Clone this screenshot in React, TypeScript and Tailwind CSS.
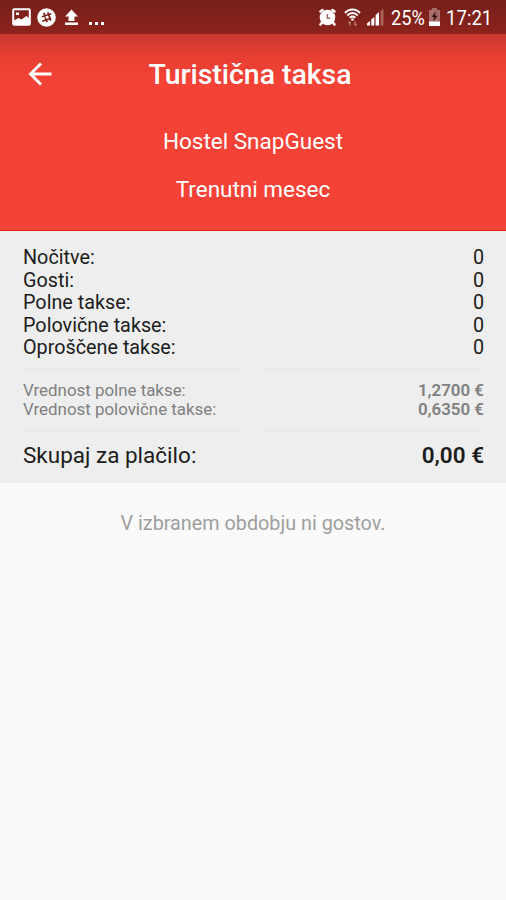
import type { ReactNode } from "react";

const COUNTS = [
  { label: "Nočitve:", value: "0" },
  { label: "Gosti:", value: "0" },
  { label: "Polne takse:", value: "0" },
  { label: "Polovične takse:", value: "0" },
  { label: "Oproščene takse:", value: "0" },
];

const RATES = [
  { label: "Vrednost polne takse:", value: "1,2700 €" },
  { label: "Vrednost polovične takse:", value: "0,6350 €" },
];

function Row({ label, children, className }: { label: string; children: ReactNode; className: string }) {
  return (
    <div className={`flex items-center justify-between whitespace-nowrap ${className}`}>
      <span>{label}</span>
      {children}
    </div>
  );
}

function Divider() {
  return (
    <div className="flex gap-3.5">
      <div className="h-px w-[222px] bg-[#e7e7e7]" />
      <div className="h-px flex-1 bg-[#e7e7e7]" />
    </div>
  );
}

function StatusBar() {
  return (
    <div className="flex h-[34px] items-center justify-between bg-linear-to-b from-[#751f1a] to-[#8b231c] pr-[14px] pl-3 text-white">
      <div className="flex items-center">
        {/* Gallery */}
        <svg className="h-[18px] w-[19px]" viewBox="0 0 19 18" fill="none">
          <rect x="1.2" y="1.2" width="16.6" height="15.6" rx="1" stroke="#fff" strokeWidth="2" />
          <path d="M2 12.500l4.500-2.500 3 1.500 5-3.500 3 2.500v6.500H2z" fill="#fff" />
          <path d="M4 4.500h3v2.500H4z" fill="#fff" />
        </svg>
        {/* Slack */}
        <svg className="ml-1.5 h-[19px] w-[19px]" viewBox="0 0 19 19">
          <circle cx="9.500" cy="9.500" r="9.300" fill="#fff" />
          <path d="M7 5.500l2.800 8M11 5l2.500 7M5.500 8.500l8-2.500M6 13l7.500-2.500" stroke="#7d211b" strokeWidth="1.800" strokeLinecap="round" />
          <circle cx="9.800" cy="9.300" r="1.100" fill="#fff" />
        </svg>
        {/* Upload */}
        <svg className="ml-[8px] h-[17px] w-[15px]" viewBox="0 0 15 17" fill="#fff">
          <path d="M7.500 .5L14 7.500h-3.500V12h-6V7.500H1zM1 13.500h13V16H1z" />
        </svg>
        <div className="mt-[12px] ml-[10px] flex gap-[3px]">
          <span className="size-[3px] bg-white" />
          <span className="size-[3px] bg-white" />
          <span className="size-[3px] bg-white" />
        </div>
      </div>
      <div className="flex items-center">
        {/* Alarm */}
        <svg className="h-[19px] w-[19px]" viewBox="0 0 19 19" fill="none">
          <circle cx="8.500" cy="9.500" r="7.800" fill="#fff" />
          <path d="M1.500 3.500L3.500 2M15.500 3.500L13.500 2M3 14.500L1.500 16.500M14 14.500l1.500 2" stroke="#fff" strokeWidth="2.600" strokeLinecap="round" />
          <path d="M8.300 6v4.200h3" stroke="#a46c68" strokeWidth="1.400" />
        </svg>
        {/* Wi-Fi */}
        <svg className="ml-[6px] h-[19px] w-[17px]" viewBox="0 0 17 19" fill="none" stroke="#fff">
          <path d="M1 5C5 .3 12 .3 16 5M3.300 7.500c3-3.400 7.400-3.400 10.400 0M5.800 9.800c1.600-1.600 3.800-1.600 5.400 0" strokeWidth="2" />
          <circle cx="8.500" cy="11.500" r="1.300" fill="#fff" stroke="none" />
          <path d="M6 17.500v-4M4.500 15L6 13.500M11 13.500v4M12.500 16L11 17.500" stroke="#bb8581" strokeWidth="1.200" />
        </svg>
        {/* Signal */}
        <svg className="ml-[6px] h-[18px] w-[17px]" viewBox="0 0 17 18" fill="#fff">
          <path d="M0 17.500v-2l3-2.500v4.500zM4.300 11.500l3-2.500v8.500h-3zM8.600 7l3.400-3v13.500H8.600z" />
          <path d="M13.500 3L16.500 .5v17h-3z" fill="#a9605b" />
        </svg>
        <span className="ml-[7px] w-[34px] pt-px text-[20px] leading-6 whitespace-nowrap">
          <span className="inline-block origin-left scale-x-[.91]">25%</span>
        </span>
        {/* Battery */}
        <svg className="ml-[4px] h-[18px] w-[11px]" viewBox="0 0 11 18">
          <path d="M3 0h5v2h3v16H0V2h3z" fill="#a96d69" />
          <path d="M0 13.500h11V18H0z" fill="#fff" />
          <path d="M7 3.500L2.500 9h2.700L4 13.500 8.700 7.800H6z" fill="#32100e" />
        </svg>
        <span className="ml-[6px] w-[46px] pt-px text-[20px] leading-6 whitespace-nowrap">
          <span className="inline-block origin-left scale-x-[.93]">17:21</span>
        </span>
      </div>
    </div>
  );
}

export default function App() {
  return (
    <div className="h-[900px] w-[506px] overflow-hidden bg-[#fafafa] font-['Roboto',sans-serif]">
      <StatusBar />

      <header className="h-[197px] border-b border-[#e0200f] bg-[#f44336] bg-linear-to-b from-[#c8382d] via-[#e83f33] via-[12%] to-[#f44336] to-[25%] text-center text-white">
        <div className="flex h-[79px] items-center px-7">
          <svg className="h-6 w-6" viewBox="0 0 24 24" fill="none" stroke="#fff" strokeWidth="2.900">
            <path d="M23.500 12H2.500M13 1.500L2.500 12 13 22.500" />
          </svg>
          <h1 className="flex-1 pt-0.5 pr-[30px] text-[28.4px] leading-8 font-medium">Turistična taksa</h1>
        </div>
        <p className="mt-[14px] text-[22.5px] leading-7">Hostel SnapGuest</p>
        <p className="mt-5 text-[22.5px] leading-7">Trenutni mesec</p>
      </header>

      <section className="h-[252px] bg-[#eeeeee] pt-[16px] pr-[22px] pl-[23px] text-[#1c1c1c]">
        {COUNTS.map((c) => (
          <Row key={c.label} label={c.label} className="h-[22.5px] text-[19.8px]">
            <span>{c.value}</span>
          </Row>
        ))}
        <div className="mt-[9px] mb-[11px]">
          <Divider />
        </div>
        {RATES.map((r) => (
          <Row key={r.label} label={r.label} className="h-[19.5px] text-[16.9px] text-[#808080]">
            <span className="font-semibold">{r.value}</span>
          </Row>
        ))}
        <div className="mt-[10px]">
          <Divider />
        </div>
        <Row label="Skupaj za plačilo:" className="mt-[9px] h-8 text-[22.5px]">
          <span className="font-semibold">0,00 €</span>
        </Row>
      </section>

      <p className="mt-[27px] text-center text-[19.8px] leading-7 text-[#9e9e9e]">
        V izbranem obdobju ni gostov.
      </p>
    </div>
  );
}
